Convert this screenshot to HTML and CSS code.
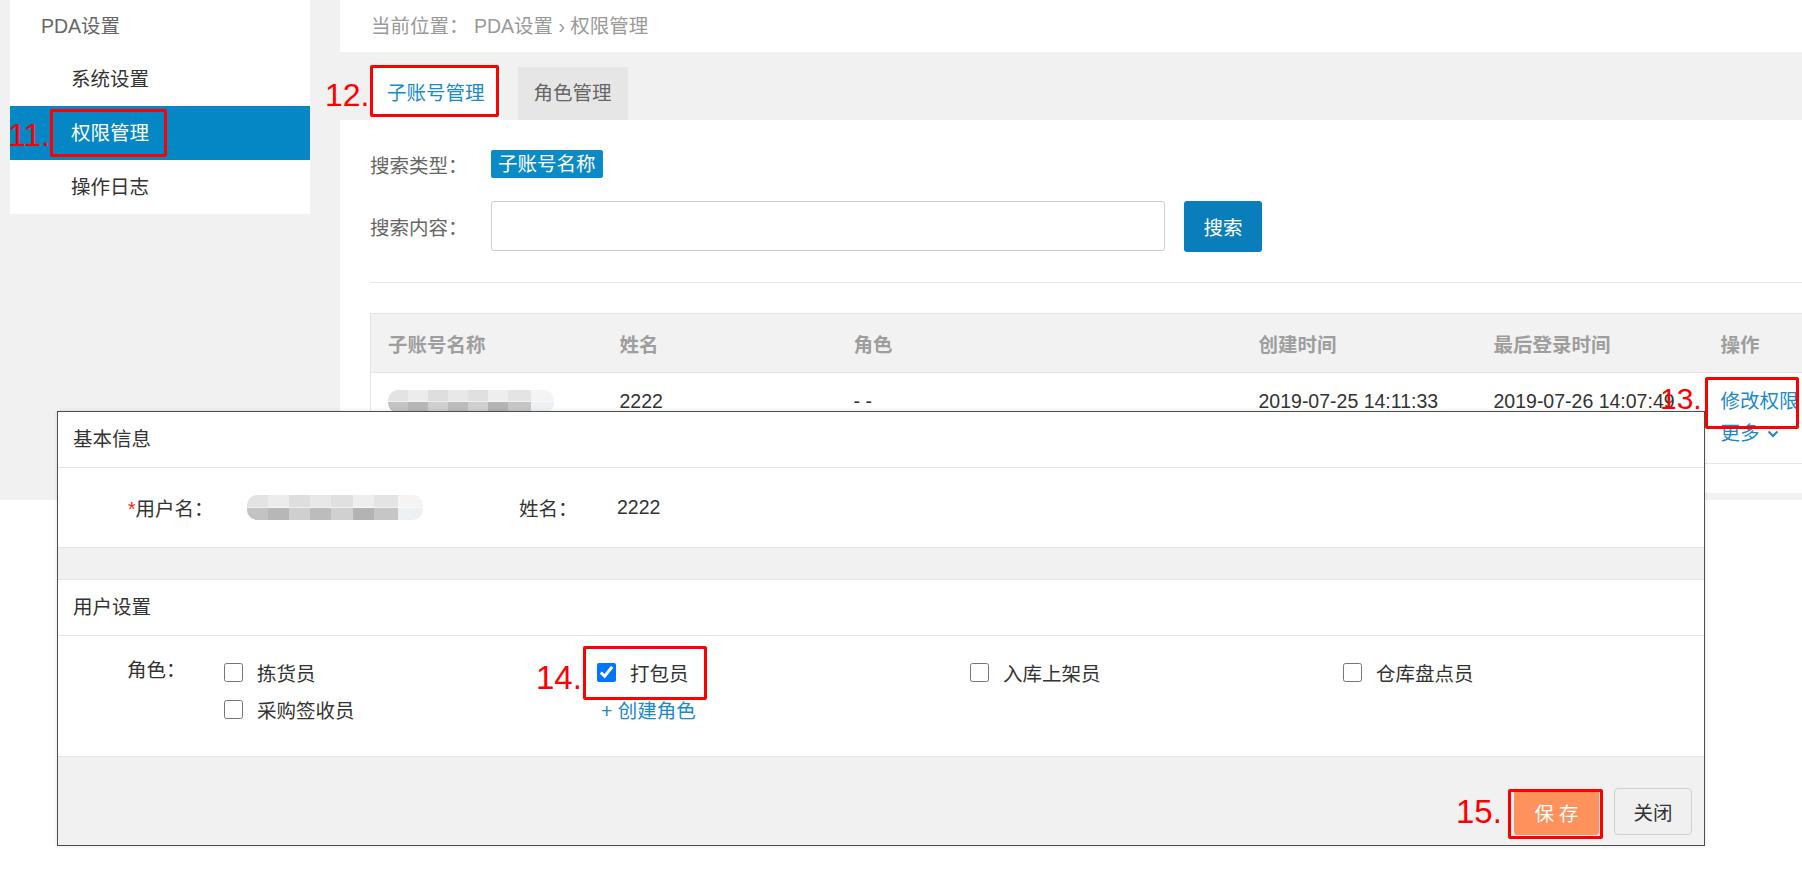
FILE: index.html
```html
<!DOCTYPE html>
<html lang="zh-CN">

<head>
    <meta charset="UTF-8">
    <meta name="viewport" content="width=device-width, initial-scale=1.0">
    <title>权限管理</title>
    <link rel="stylesheet" href="styles.css">
</head>

<body>
    <div class="page">
        <div class="frame">
            <aside class="side">
                <div class="side-title">PDA设置</div>
                <div class="side-item">系统设置</div>
                <div class="side-item active">权限管理</div>
                <div class="side-item">操作日志</div>
            </aside>

            <main class="main">
                <div class="crumb">当前位置： PDA设置 › 权限管理</div>
                <div class="tabs">
                    <div class="tab active">子账号管理</div>
                    <div class="tab">角色管理</div>
                </div>
                <div class="content">
                    <div class="search-row">
                        <span class="search-label">搜索类型：</span>
                        <span class="tag">子账号名称</span>
                    </div>
                    <div class="search-row search-row-input">
                        <span class="search-label">搜索内容：</span>
                        <input class="search-input" type="text">
                        <button class="btn-search">搜索</button>
                    </div>
                    <div class="divider"></div>

                    <table class="list">
                        <colgroup>
                            <col style="width:232px">
                            <col style="width:234px">
                            <col style="width:405px">
                            <col style="width:235px">
                            <col style="width:227px">
                            <col>
                        </colgroup>
                        <thead>
                            <tr>
                                <th>子账号名称</th>
                                <th>姓名</th>
                                <th>角色</th>
                                <th>创建时间</th>
                                <th>最后登录时间</th>
                                <th>操作</th>
                            </tr>
                        </thead>
                        <tbody>
                            <tr>
                                <td><span class="blur blur-sm"></span></td>
                                <td>2222</td>
                                <td>- -</td>
                                <td>2019-07-25 14:11:33</td>
                                <td>2019-07-26 14:07:49</td>
                                <td>
                                    <a class="link">修改权限</a><br>
                                    <a class="link">更多
                                        <svg class="caret" width="12" height="8" viewBox="0 0 12 8">
                                            <polyline points="1.5,1.5 6,6 10.5,1.5" fill="none" stroke="#1a8ad0" stroke-width="2"/>
                                        </svg>
                                    </a>
                                </td>
                            </tr>
                        </tbody>
                    </table>
                </div>
            </main>
        </div>

        <!-- 弹窗 -->
        <div class="dialog">
            <div class="dlg-head">基本信息</div>
            <div class="dlg-info">
                <span class="info-label"><i class="req">*</i>用户名：</span>
                <span class="blur blur-lg"></span>
                <span class="info-label info-name">姓名：</span>
                <span>2222</span>
            </div>
            <div class="dlg-gap"></div>
            <div class="dlg-head">用户设置</div>
            <div class="dlg-roles">
                <span class="roles-label">角色：</span>
                <div class="roles">
                    <label class="role"><input type="checkbox">拣货员</label>
                    <label class="role"><input type="checkbox" checked>打包员</label>
                    <label class="role"><input type="checkbox">入库上架员</label>
                    <label class="role"><input type="checkbox">仓库盘点员</label>
                    <label class="role"><input type="checkbox">采购签收员</label>
                    <a class="link role-add">+ 创建角色</a>
                </div>
            </div>
            <div class="dlg-foot">
                <button class="btn-save">保存</button>
                <button class="btn-close">关闭</button>
            </div>
        </div>

        <!-- 标注 -->
        <span class="mark n11">11.</span>
        <span class="mark n12">12.</span>
        <span class="mark n13">13.</span>
        <span class="mark n14">14.</span>
        <span class="mark n15">15.</span>
        <div class="box b11"></div>
        <div class="box b12"></div>
        <div class="box b13"></div>
        <div class="box b14"></div>
        <div class="box b15"></div>
    </div>
</body>

</html>
```

FILE: styles.css
```css
body {
    margin: 0;
    background: #fff;
    font-family: "Liberation Sans", "Noto Sans CJK SC", sans-serif;
    font-size: 19.5px;
    color: #333;
}

.page {
    position: relative;
    width: 1802px;
    height: 882px;
    overflow: hidden;
}

.frame {
    display: flex;
    height: 500px;
    padding-left: 10px;
    background: #f1f1f1;
}

/* 左侧菜单 */
.side {
    width: 300px;
    flex-shrink: 0;
    align-self: flex-start;
    background: #fff;
}

.side-title {
    height: 52px;
    line-height: 52px;
    padding-left: 31px;
    color: #666;
}

.side-item {
    height: 54px;
    line-height: 54px;
    padding-left: 61px;
}

.side-item.active {
    background: #0587c6;
    color: #fff;
}

/* 右侧主体 */
.main {
    flex: 1;
    min-width: 0;
    margin-left: 30px;
    height: 493px;
    display: flex;
    flex-direction: column;
}

.crumb {
    height: 52px;
    line-height: 52px;
    padding-left: 31px;
    background: #fff;
    color: #999;
}

.tabs {
    display: flex;
    gap: 17px;
    height: 68px;
    box-sizing: border-box;
    padding: 15px 0 0 31px;
    background: #f1f1f1;
}

.tab {
    height: 53px;
    line-height: 53px;
    padding: 0 16px;
    background: #e6e6e6;
    color: #666;
}

.tab.active {
    background: #fff;
    color: #1b8acb;
}

.content {
    flex: 1;
    background: #fff;
    padding: 30px 0 0 30px;
    overflow: hidden;
}

.search-row {
    display: flex;
    align-items: center;
    height: 28px;
}

.search-row-input {
    height: 50px;
    margin-top: 23px;
}

.search-label {
    width: 121px;
    flex-shrink: 0;
    color: #666;
}

.tag {
    height: 28px;
    line-height: 28px;
    padding: 0 7px;
    border-radius: 2px;
    background: #0a8bc8;
    color: #fff;
}

.search-input {
    width: 674px;
    height: 50px;
    box-sizing: border-box;
    border: 1px solid #ccc;
    border-radius: 3px;
    margin: 0;
}

.btn-search {
    width: 78px;
    height: 51px;
    margin-left: 19px;
    border: 0;
    border-radius: 3px;
    background: #0a7dbb;
    color: #fff;
    font: inherit;
}

.divider {
    margin-top: 31px;
    border-top: 1px solid #e5e5e5;
}

/* 列表 */
.list {
    margin-top: 30px;
    width: 1432px;
    border-collapse: collapse;
    table-layout: fixed;
    border-left: 1px solid #e5e5e5;
}

.list th {
    height: 58px;
    padding: 0 17px;
    text-align: left;
    font-weight: bold;
    color: #9e9e9e;
    background: #f2f2f2;
    border-top: 1px solid #e5e5e5;
    border-bottom: 1px solid #e5e5e5;
    white-space: nowrap;
}

.list td {
    padding: 12px 17px 14px;
    line-height: 32px;
    vertical-align: top;
    border-bottom: 1px solid #e5e5e5;
    white-space: nowrap;
}

.link {
    color: #1a8ad0;
    text-decoration: none;
}

.caret {
    vertical-align: 2px;
    margin-left: 2px;
}

/* 打码 */
.blur {
    display: inline-block;
    border-radius: 10px;
    filter: blur(0.5px);
    background:
        linear-gradient(to right, #e3e3e3 0 12%, #ececec 12% 24%, #dedede 24% 36%, #e8e8e8 36% 48%, #e0e0e0 48% 60%, #eeeeee 60% 72%, #e4e4e4 72% 86%, #f4f4f4 86%) top / 100% 50% no-repeat,
        linear-gradient(to right, #c3c3c3 0 12%, #b7b7b7 12% 24%, #cfcfcf 24% 36%, #bcbcbc 36% 48%, #d0d0d0 48% 60%, #b3b3b3 60% 72%, #c6c6c6 72% 86%, #eef1f4 86%) bottom / 100% 50% no-repeat;
}

.blur-sm {
    width: 166px;
    height: 23px;
    vertical-align: -5px;
}

.blur-lg {
    width: 176px;
    height: 25px;
    flex-shrink: 0;
}

/* 弹窗 */
.dialog {
    position: absolute;
    left: 57px;
    top: 411px;
    width: 1646px;
    background: #fff;
    border: 1px solid #4d4d4d;
    box-shadow: 0 0 4px rgba(0, 0, 0, 0.12);
}

.dlg-head {
    height: 55px;
    line-height: 55px;
    padding-left: 15px;
    border-bottom: 1px solid #e5e5e5;
}

.dlg-info {
    display: flex;
    align-items: center;
    height: 79px;
    padding-left: 70px;
}

.info-label {
    width: 119px;
    flex-shrink: 0;
}

.info-name {
    width: 98px;
    margin-left: 96px;
}

.req {
    font-style: normal;
    color: #f22;
}

.dlg-gap {
    height: 31px;
    background: #f1f1f1;
    border-top: 1px solid #e5e5e5;
    border-bottom: 1px solid #e5e5e5;
}

.dlg-roles {
    display: flex;
    height: 120px;
    box-sizing: border-box;
    padding: 18px 0 0 69px;
}

.roles-label {
    width: 97px;
    flex-shrink: 0;
    line-height: 32px;
}

.roles {
    display: grid;
    grid-template-columns: repeat(4, 373px);
    grid-auto-rows: 37px;
}

.role {
    display: flex;
    align-items: center;
}

.role input {
    width: 19px;
    height: 19px;
    margin: 0 14px 0 0;
}

.role-add {
    display: flex;
    align-items: center;
    padding-left: 4px;
}

.dlg-foot {
    display: flex;
    justify-content: flex-end;
    align-items: flex-end;
    gap: 15px;
    height: 89px;
    box-sizing: border-box;
    padding: 0 12px 10px 0;
    background: #f1f1f1;
    border-top: 1px solid #e5e5e5;
}

.btn-save {
    width: 85px;
    height: 45px;
    border: 0;
    border-radius: 3px;
    background: #ff915c;
    color: #fff;
    font: inherit;
    letter-spacing: 5px;
    text-indent: 5px;
}

.btn-close {
    width: 78px;
    height: 47px;
    border: 1px solid #d0d0d0;
    border-radius: 4px;
    background: #f0f0f0;
    color: #333;
    font: inherit;
}

/* 红色标注 */
.mark {
    position: absolute;
    font-family: "Liberation Sans", sans-serif;
    line-height: 1;
    color: #f00;
}

.n11 { left: 8px; top: 119px; font-size: 32px; }
.n12 { left: 325px; top: 79px; font-size: 32px; }
.n13 { left: 1660px; top: 384px; font-size: 30px; }
.n14 { left: 536px; top: 661px; font-size: 33px; }
.n15 { left: 1456px; top: 795px; font-size: 33px; }

.box {
    position: absolute;
    box-sizing: border-box;
    border: 3px solid #f00;
    border-radius: 2px;
}

.b11 { left: 50px; top: 109px; width: 117px; height: 48px; }
.b12 { left: 370px; top: 65px; width: 129px; height: 52px; }
.b13 { left: 1705px; top: 377px; width: 94px; height: 52px; }
.b14 { left: 583px; top: 646px; width: 124px; height: 54px; }
.b15 { left: 1508px; top: 789px; width: 95px; height: 50px; }
```
